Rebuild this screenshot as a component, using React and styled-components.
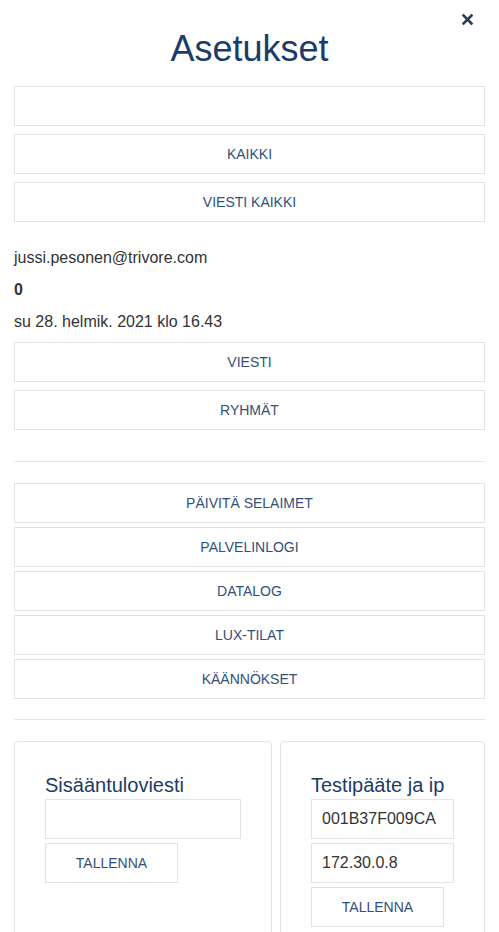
import React from 'react'
import styled, { createGlobalStyle } from 'styled-components'

const GlobalStyle = createGlobalStyle`
  body {
    margin: 0;
    background: #fff;
    font-family: "Liberation Sans", Arial, sans-serif;
    color: #333;
  }
  * {
    box-sizing: border-box;
  }
`

const TOP_ACTIONS = ['', 'Kaikki', 'Viesti kaikki']
const USER_ACTIONS = ['Viesti', 'Ryhmät']
const ADMIN_ACTIONS = [
  'Päivitä selaimet',
  'Palvelinlogi',
  'Datalog',
  'Lux-tilat',
  'Käännökset'
]

function CloseIcon() {
  return (
    <svg width="11" height="11" viewBox="0 0 11 11">
      <path
        d="M1.5 1.5 L9.5 9.5 M9.5 1.5 L1.5 9.5"
        stroke="#2b3d55"
        strokeWidth="2.6"
        strokeLinecap="square"
      />
    </svg>
  )
}

function App() {
  return (
    <>
      <GlobalStyle />
      <Page>
        <CloseButton type="button" aria-label="Sulje">
          <CloseIcon />
        </CloseButton>
        <Title>Asetukset</Title>

        <ButtonStack gap={8}>
          {TOP_ACTIONS.map((label, i) => (
            <ActionButton key={i} type="button">
              {label}
            </ActionButton>
          ))}
        </ButtonStack>

        <InfoBlock>
          <InfoLine>jussi.pesonen@trivore.com</InfoLine>
          <InfoLine bold>0</InfoLine>
          <InfoLine>su 28. helmik. 2021 klo 16.43</InfoLine>
        </InfoBlock>

        <ButtonStack gap={8}>
          {USER_ACTIONS.map(label => (
            <ActionButton key={label} type="button">
              {label}
            </ActionButton>
          ))}
        </ButtonStack>

        <Divider top={31} />

        <ButtonStack gap={4}>
          {ADMIN_ACTIONS.map(label => (
            <ActionButton key={label} type="button">
              {label}
            </ActionButton>
          ))}
        </ButtonStack>

        <Divider top={20} />

        <CardGrid>
          <Card>
            <CardTitle>Sisääntuloviesti</CardTitle>
            <FieldStack>
              <TextInput type="text" defaultValue="" />
              <SaveButton type="button">Tallenna</SaveButton>
            </FieldStack>
          </Card>
          <Card>
            <CardTitle>Testipääte ja ip</CardTitle>
            <FieldStack>
              <TextInput type="text" defaultValue="001B37F009CA" />
              <TextInput type="text" defaultValue="172.30.0.8" />
              <SaveButton type="button">Tallenna</SaveButton>
            </FieldStack>
          </Card>
        </CardGrid>
      </Page>
    </>
  )
}

const Page = styled.div`
  position: relative;
  padding: 0 14px 40px;
`

const CloseButton = styled.button`
  position: absolute;
  top: 14px;
  right: 26px;
  width: 11px;
  height: 11px;
  padding: 0;
  border: 0;
  background: none;
  display: flex;
  cursor: pointer;
`

const Title = styled.h1`
  margin: 0;
  padding: 28px 0 17px;
  font-size: 36px;
  line-height: 41px;
  font-weight: 400;
  text-align: center;
  color: #1c3b69;
`

const ButtonStack = styled.div`
  display: flex;
  flex-direction: column;
  gap: ${props => props.gap}px;
`

const ActionButton = styled.button`
  height: 40px;
  width: 100%;
  border: 1px solid #e3e3e3;
  background: #fff;
  font-family: "Liberation Sans", Arial, sans-serif;
  font-size: 14px;
  color: #33507a;
  text-transform: uppercase;
  cursor: pointer;
`

const InfoBlock = styled.div`
  padding: 25px 0 9px;
`

const InfoLine = styled.p`
  margin: 0 0 10px;
  font-size: 16px;
  line-height: 22px;
  font-weight: ${props => (props.bold ? 700 : 400)};
  color: #333;

  &:last-child {
    margin-bottom: 0;
  }
`

const Divider = styled.hr`
  margin: ${props => props.top}px 0 21px;
  border: 0;
  border-top: 1px solid #e5e5e5;
  height: 0;
`

const CardGrid = styled.div`
  display: grid;
  grid-template-columns: 258px 1fr;
  gap: 8px;
  align-items: start;
`

const Card = styled.div`
  border: 1px solid #e3e3e3;
  border-radius: 4px;
  padding: 29px 30px 30px;
  min-height: 240px;
`

const CardTitle = styled.h3`
  margin: 0;
  font-size: 20px;
  line-height: 28px;
  font-weight: 400;
  color: #1c3b69;
`

const FieldStack = styled.div`
  display: flex;
  flex-direction: column;
  align-items: flex-start;
  gap: 4px;
`

const TextInput = styled.input`
  width: 100%;
  height: 40px;
  padding: 0 10px;
  border: 1px solid #e3e3e3;
  font-family: "Liberation Sans", Arial, sans-serif;
  font-size: 16px;
  color: #333;
  outline: none;
`

const SaveButton = styled(ActionButton)`
  width: 133px;
`

export default App
